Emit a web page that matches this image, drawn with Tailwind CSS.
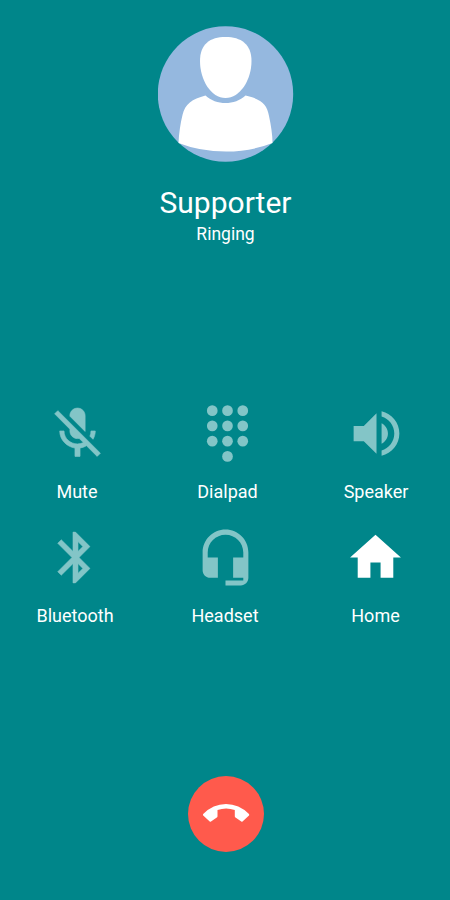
<!DOCTYPE html>
<html lang="en">
<head>
    <meta charset="UTF-8">
    <title>Call</title>
    <script src="https://cdn.jsdelivr.net/npm/@tailwindcss/browser@4"></script>
</head>
<body class="bg-[#00868a] font-[Roboto,sans-serif] text-white">
    <div class="w-[450px] h-[900px] flex flex-col items-center overflow-hidden pt-[26px] pl-px">
        <!-- Caller -->
        <svg class="w-[136px] h-[136px] shrink-0" viewBox="0 0 136 136">
            <circle cx="67.5" cy="68" r="67.7" fill="#95b8df"/>
            <path fill="#fff" d="M67.500 11C83 11 93.500 18 93.500 35C93.500 54 82 72 67.500 72C53 72 42 54 42 35C42 18 52 11 67.500 11Z"/>
            <path fill="#fff" d="M47.500 69.500C58 79.500 77 79.500 87.500 69.500C103 73 109 78 111 90C113 99 114.500 109 114.500 117Q93 125.500 68 125.500Q42 125.500 20.500 117C21 107 22.500 97 24.500 89C27 78 34 73 47.500 69.500Z"/>
        </svg>
        <h1 class="mt-[23px] text-[30px] leading-9">Supporter</h1>
        <p class="mt-px text-[17.5px] leading-6">Ringing</p>

        <!-- Call controls -->
        <div class="mt-[157px] w-full grid grid-cols-[152px_149px_148px] text-center text-[18px] leading-6">
            <div class="flex flex-col items-center">
                <svg class="w-[61px] h-[61px] fill-[#83c5c7] stroke-[#83c5c7] stroke-[0.25]" viewBox="0 0 24 24"><path d="M19 11h-1.700c0 .74-.16 1.430-.43 2.050l1.230 1.230c.56-.98.9-2.090.9-3.280zm-4.020.17c0-.06.02-.11.02-.17V5c0-1.660-1.340-3-3-3S9 3.340 9 5v.18l5.980 5.990zM4.270 3L3 4.270l6.010 6.010V11c0 1.660 1.330 3 2.990 3 .22 0 .44-.03.65-.08l1.660 1.660c-.71.33-1.500.52-2.310.52-2.760 0-5.300-2.100-5.300-5.100H5c0 3.410 2.720 6.230 6 6.720V21h2v-3.280c.91-.13 1.770-.45 2.540-.9L19.730 21 21 19.730 4.270 3z"/></svg>
                <span class="mt-4">Mute</span>
            </div>
            <div class="flex flex-col items-center">
                <svg class="w-[61px] h-[61px] fill-[#83c5c7]" viewBox="0 0 24 24">
                    <circle cx="6" cy="3" r="2.1"/><circle cx="12" cy="3" r="2.1"/><circle cx="18" cy="3" r="2.1"/>
                    <circle cx="6" cy="9" r="2.1"/><circle cx="12" cy="9" r="2.1"/><circle cx="18" cy="9" r="2.1"/>
                    <circle cx="6" cy="15" r="2.1"/><circle cx="12" cy="15" r="2.1"/><circle cx="18" cy="15" r="2.1"/>
                    <circle cx="12" cy="21" r="2.1"/>
                </svg>
                <span class="mt-4">Dialpad</span>
            </div>
            <div class="flex flex-col items-center">
                <svg class="w-[61px] h-[61px] fill-[#83c5c7]" viewBox="0 0 24 24"><path d="M3 9v6h4l5 5V4L7 9H3zm13.500 3c0-1.770-1.020-3.290-2.500-4.030v8.050c1.480-.73 2.500-2.250 2.500-4.020zM14 3.230v2.060c2.890.86 5 3.540 5 6.710s-2.110 5.850-5 6.710v2.060c4.010-.91 7-4.490 7-8.770s-2.990-7.860-7-8.770z"/></svg>
                <span class="mt-4">Speaker</span>
            </div>
        </div>
        <div class="mt-[23px] w-full grid grid-cols-[148px_152px_149px] text-center text-[18px] leading-6">
            <div class="flex flex-col items-center">
                <svg class="w-[61px] h-[61px] fill-[#83c5c7] stroke-[#83c5c7] stroke-[0.2]" viewBox="0 0 24 24"><path d="M17.710 7.710L12 2h-1v7.590L6.410 5 5 6.410 10.590 12 5 17.590 6.410 19 11 14.410V22h1l5.710-5.710-4.300-4.290 4.300-4.290zM13 5.830l1.880 1.880L13 9.590V5.830zm1.880 10.460L13 18.170v-3.760l1.880 1.880z"/></svg>
                <span class="mt-4">Bluetooth</span>
            </div>
            <div class="flex flex-col items-center">
                <svg class="w-[61px] h-[61px] fill-[#83c5c7]" viewBox="0 0 24 24"><path d="M12 1c-4.970 0-9 4.030-9 9v7c0 1.660 1.340 3 3 3h3v-8H5v-2c0-3.870 3.130-7 7-7s7 3.130 7 7v2h-4v8h4v1h-7v2h6c1.660 0 3-1.340 3-3V10c0-4.970-4.030-9-9-9z"/></svg>
                <span class="mt-4">Headset</span>
            </div>
            <div class="flex flex-col items-center">
                <svg class="w-[61px] h-[61px] fill-white" viewBox="0 0 24 24"><path d="M10 20v-6h4v6h5v-8h3L12 3 2 12h3v8z"/></svg>
                <span class="mt-4">Home</span>
            </div>
        </div>

        <!-- Hang up -->
        <button class="mt-[148px] w-[76px] h-[76px] shrink-0 rounded-full bg-[#ff5a4c]">
            <svg class="w-[76px] h-[76px] fill-white" viewBox="0 0 76 76"><path d="M15.200 38Q25 28 38 28Q51 28 61 38Q61.500 39 61 39.600L54.500 45.500Q54 46 53.300 45.500L47.500 41.500Q46.800 41 46.800 40.300V34Q38 31 29.500 34V40.300Q29.500 41 28.800 41.500L23 45.500Q22.300 46 21.700 45.500L15.200 39.600Q14.600 38.800 15.200 38Z"/></svg>
        </button>
    </div>
</body>
</html>
